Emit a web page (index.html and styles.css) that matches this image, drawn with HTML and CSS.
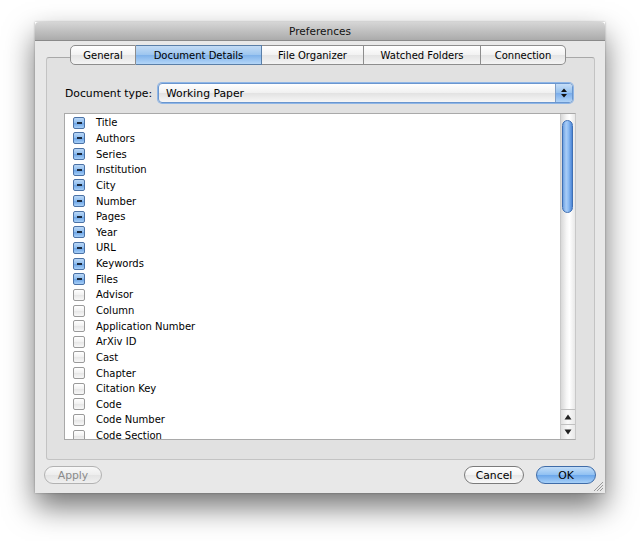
FILE: index.html
```html
<!DOCTYPE html>
<html>
  <head>
    <title>Preferences</title>
    <link rel="stylesheet" href="styles.css">
  </head>
  <body>
    <div class="window">
      <div class="titlebar">Preferences</div>

      <div class="content">
        <div class="tabs">
          <div class="tab first">General</div>
          <div class="tab selected">Document Details</div>
          <div class="tab">File Organizer</div>
          <div class="tab">Watched Folders</div>
          <div class="tab last">Connection</div>
        </div>

        <div class="group">
          <div class="type-row">
            <label>Document type:</label>
            <div class="popup">
              <span class="popup-value">Working Paper</span>
              <span class="popup-arrows">
                <svg width="8" height="12" viewBox="0 0 8 12">
                  <path d="M4 1.5 L7 5 L1 5 Z" fill="#111"/>
                  <path d="M4 10.5 L7 7 L1 7 Z" fill="#111"/>
                </svg>
              </span>
            </div>
          </div>

          <div class="listbox">
            <ul class="fields">
              <li><span class="check on"></span>Title</li>
              <li><span class="check on"></span>Authors</li>
              <li><span class="check on"></span>Series</li>
              <li><span class="check on"></span>Institution</li>
              <li><span class="check on"></span>City</li>
              <li><span class="check on"></span>Number</li>
              <li><span class="check on"></span>Pages</li>
              <li><span class="check on"></span>Year</li>
              <li><span class="check on"></span>URL</li>
              <li><span class="check on"></span>Keywords</li>
              <li><span class="check on"></span>Files</li>
              <li><span class="check"></span>Advisor</li>
              <li><span class="check"></span>Column</li>
              <li><span class="check"></span>Application Number</li>
              <li><span class="check"></span>ArXiv ID</li>
              <li><span class="check"></span>Cast</li>
              <li><span class="check"></span>Chapter</li>
              <li><span class="check"></span>Citation Key</li>
              <li><span class="check"></span>Code</li>
              <li><span class="check"></span>Code Number</li>
              <li><span class="check"></span>Code Section</li>
            </ul>
            <div class="scrollbar">
              <div class="thumb"></div>
              <div class="track"></div>
              <div class="arrow">
                <svg width="8" height="6" viewBox="0 0 8 6"><path d="M4 0.5 L7.5 5.5 L0.5 5.5 Z" fill="#222"/></svg>
              </div>
              <div class="arrow">
                <svg width="8" height="6" viewBox="0 0 8 6"><path d="M4 5.5 L7.5 0.5 L0.5 0.5 Z" fill="#222"/></svg>
              </div>
            </div>
          </div>
        </div>

        <div class="buttons">
          <div class="button disabled">Apply</div>
          <div class="spacer"></div>
          <div class="button">Cancel</div>
          <div class="button default">OK</div>
        </div>

        <svg class="grip" width="10" height="10" viewBox="0 0 10 10">
          <path d="M10 1 L1 10 M10 4 L4 10 M10 7 L7 10" stroke="#999" stroke-width="1"/>
        </svg>
      </div>
    </div>
  </body>
</html>
```

FILE: styles.css
```css
body {
  margin: 0;
  background-color: #fff;
  font-family: "DejaVu Sans", Verdana, sans-serif;
  color: #000;
  height: 541px;
}

.window {
  margin: 22px 0 0 35px;
  width: 570px;
  height: 471px;
  display: flex;
  flex-direction: column;
  box-shadow: 0 14px 28px rgba(0, 0, 0, 0.55), 0 0 2px rgba(0, 0, 0, 0.3);
}

.titlebar {
  height: 19px;
  line-height: 19px;
  text-align: center;
  font-size: 10.5px;
  background: linear-gradient(#d6d6d6, #ababab);
  border-bottom: 1px solid #8a8a8a;
  border-radius: 4px 4px 0 0;
  box-sizing: border-box;
  color: #111;
}

.content {
  flex: 1;
  position: relative;
  background-color: #e8e8e8;
  display: flex;
  flex-direction: column;
  padding: 0 9px;
}

.tabs {
  display: flex;
  justify-content: center;
  margin: 4px 0 0 -4px;
  position: relative;
  z-index: 1;
}

.tab {
  height: 20px;
  line-height: 20px;
  box-sizing: border-box;
  font-size: 10px;
  text-align: center;
  background: linear-gradient(#ffffff, #f2f2f2 50%, #e4e4e4 51%, #f4f4f4);
  border: 1px solid #8d8d8d;
  border-left: none;
}

.tab:nth-child(1) { width: 66px; }
.tab:nth-child(2) { width: 126px; }
.tab:nth-child(3) { width: 102px; }
.tab:nth-child(4) { width: 117px; }
.tab:nth-child(5) { width: 85px; }

.tab.first {
  border-left: 1px solid #8d8d8d;
  border-radius: 5px 0 0 5px;
}

.tab.last {
  border-radius: 0 5px 5px 0;
}

.tab.selected {
  background: linear-gradient(#c4dcf5, #9cc5ef 50%, #7fb2ea 51%, #b4d6f8);
  border-color: #5a7fa8;
}

.group {
  margin: -8px 1px 0 2px;
  height: 403px;
  box-sizing: border-box;
  background-color: #e1e1e1;
  border: 1px solid #c3c3c3;
  border-top-color: #a8a8a8;
  border-radius: 3px;
  padding: 25px 21px 0 16px;
  display: flex;
  flex-direction: column;
}

.type-row {
  display: flex;
  align-items: center;
  height: 20px;
}

.type-row label {
  font-size: 10.8px;
  width: 93px;
  padding-left: 2px;
}

.popup {
  flex: 1;
  height: 20px;
  box-sizing: border-box;
  display: flex;
  border: 1px solid #6a96cf;
  border-radius: 4px;
  box-shadow: 0 0 0 1px #8fb6e6;
  background: linear-gradient(#ffffff, #f0f0f0 50%, #e2e2e2 51%, #f6f6f6);
  overflow: hidden;
}

.popup-value {
  flex: 1;
  font-size: 10.8px;
  line-height: 19px;
  padding-left: 7px;
}

.popup-arrows {
  width: 16px;
  display: flex;
  align-items: center;
  justify-content: center;
  border-left: 1px solid #7f9fc8;
  background: linear-gradient(#c6def7, #94c0ee 50%, #79acea 51%, #b0d3f7);
}

.listbox {
  margin: 10px -3px 0 1px;
  height: 327px;
  box-sizing: border-box;
  background-color: #fff;
  border: 1px solid #a9a9a9;
  border-right-color: #c8c8c8;
  display: flex;
  overflow: hidden;
}

.fields {
  flex: 1;
  list-style: none;
  margin: 0;
  padding: 1px 0 0 8px;
}

.fields li {
  height: 15.65px;
  display: flex;
  align-items: center;
  font-size: 10px;
}

.check {
  width: 12px;
  height: 12px;
  box-sizing: border-box;
  margin-right: 11px;
  border: 1px solid #9a9a9a;
  border-radius: 2px;
  background: linear-gradient(#ffffff, #f1f1f1 50%, #e6e6e6 51%, #f8f8f8);
  position: relative;
}

.check.on {
  border-color: #4b72a6;
  background: linear-gradient(#bad7f6, #8cbcef 50%, #6aa3e6 51%, #a7cff7);
}

.check.on::after {
  content: "";
  position: absolute;
  left: 3px;
  top: 4px;
  width: 5px;
  height: 2px;
  background-color: #1b2a3e;
}

.scrollbar {
  width: 15px;
  display: flex;
  flex-direction: column;
  border-left: 1px solid #c9c9c9;
  background: linear-gradient(to right, #d8d8d8, #f6f6f6 40%, #ffffff 60%, #e8e8e8);
  padding-top: 6px;
  box-sizing: border-box;
}

.thumb {
  margin: 0 2px 0 1px;
  height: 91px;
  border-radius: 6px;
  border: 1px solid #3e6fb4;
  background: linear-gradient(to right, #6b9fe0, #a9cdf7 35%, #8dbcf3 60%, #4d86d6);
}

.track {
  flex: 1;
}

.arrow {
  height: 14px;
  display: flex;
  align-items: center;
  justify-content: center;
  border-top: 1px solid #c0c0c0;
  background: linear-gradient(to right, #e0e0e0, #fafafa 50%, #e8e8e8);
}

.buttons {
  display: flex;
  align-items: center;
  margin-top: 6px;
  gap: 12px;
}

.spacer {
  flex: 1;
}

.button {
  height: 18px;
  line-height: 17px;
  box-sizing: border-box;
  border: 1px solid #7b7b7b;
  border-radius: 9px;
  font-size: 10.8px;
  text-align: center;
  width: 60px;
  background: linear-gradient(#ffffff, #f3f3f3 50%, #e6e6e6 51%, #fafafa);
}

.button.disabled {
  width: 58px;
  color: #8a8a8a;
  border-color: #b2b2b2;
  background: linear-gradient(#f8f8f8, #ededed 50%, #e3e3e3 51%, #f0f0f0);
}

.button.default {
  border-color: #3f6ca8;
  background: linear-gradient(#c2ddf8, #8fc0f2 50%, #6ba6ea 51%, #a6d0f8);
}

.grip {
  position: absolute;
  right: 2px;
  bottom: 2px;
}
```
